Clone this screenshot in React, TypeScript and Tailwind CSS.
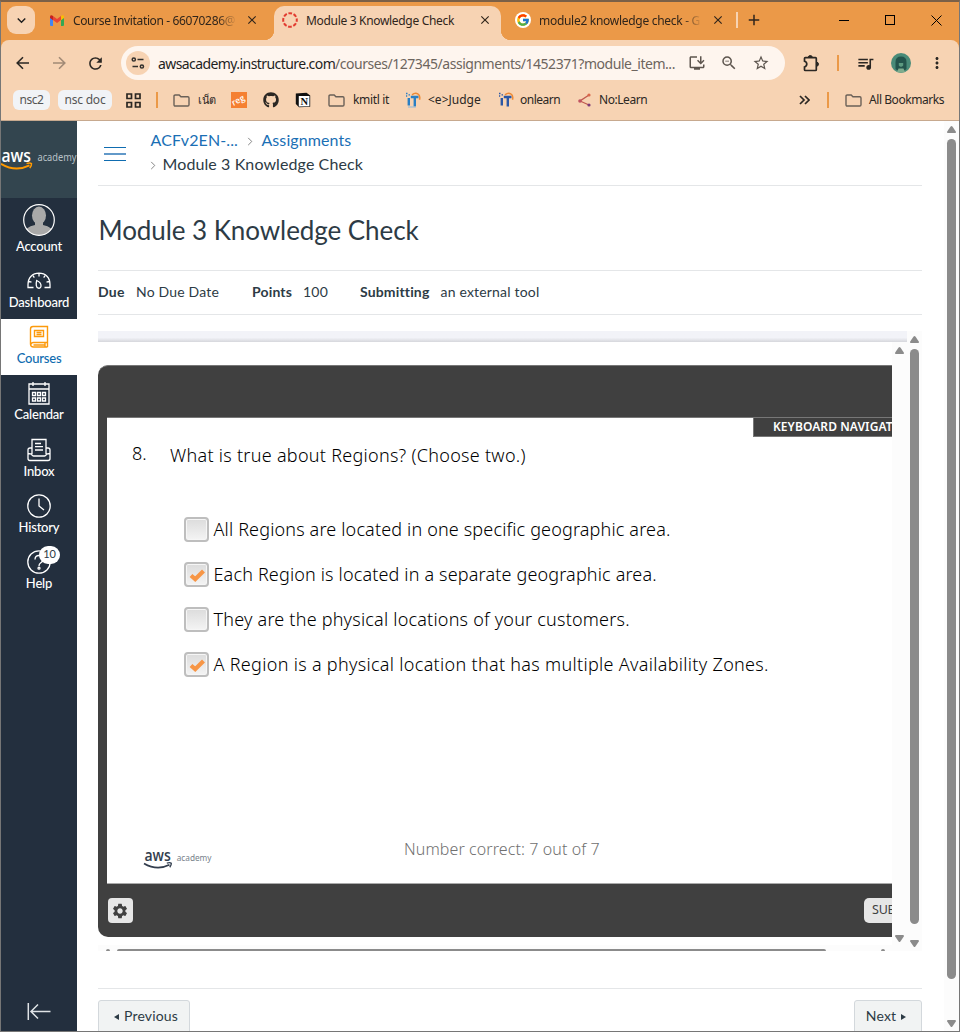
import type { ReactNode } from 'react';
import {
  MdClose, MdInstallDesktop, MdMoreVert, MdQueueMusic, MdRefresh, MdStarBorder, MdZoomOut, MdAdd, MdKeyboardArrowDown, MdSettings,
} from 'react-icons/md';
import { FaGithub } from 'react-icons/fa';
import { FcGoogle } from 'react-icons/fc';

function Gmail() {
  return (
    <svg viewBox="0 0 28 22" className="h-[11px] w-[14px] shrink-0">
      <path d="M0 3v17q0 2 2 2h4V9L0 4z" fill="#4285f4" />
      <path d="M28 3v17q0 2-2 2h-4V9l6-5z" fill="#34a853" />
      <path d="M6 2v8l8 6 8-6V2l-8 6z" fill="#ea4335" />
      <path d="M0 4v2l6 4.5V2C3-1 0 0 0 4z" fill="#c5221f" />
      <path d="M28 4v2l-6 4.5V2c3-3 6-2 6 2z" fill="#fbbc04" />
    </svg>
  );
}

function CanvasRing() {
  return (
    <svg viewBox="0 0 16 16" className="size-4 shrink-0">
      <circle cx="8" cy="8" r="6.8" fill="none" stroke="#e23b30" strokeWidth="2" strokeDasharray="3.7 1.64" strokeDashoffset="1.85" />
    </svg>
  );
}

function SiteInfo() {
  return (
    <svg viewBox="0 0 24 24" className="size-6 shrink-0">
      <circle cx="12" cy="12" r="12" fill="#f7d3b3" />
      <g stroke="#33302d" strokeWidth="1.5" fill="none">
        <circle cx="7.8" cy="8.5" r="1.6" />
        <path d="M11.5 8.5h6M6.500 15.500h5.500" />
        <circle cx="15.9" cy="15.5" r="1.6" />
      </g>
    </svg>
  );
}

function HistoryArrow({ back, className }: { back?: boolean; className: string }) {
  return (
    <svg viewBox="0 0 14 14" className={`size-[14px] shrink-0 fill-none stroke-current stroke-[1.6] ${className}`}>
      {back ? <path d="M13 7H1.500M7 1.200 1.200 7 7 12.800" /> : <path d="M1 7h11.500M7 1.200 12.800 7 7 12.800" />}
    </svg>
  );
}

function Folder({ className }: { className: string }) {
  return (
    <svg viewBox="0 0 17 13" className={`h-[13px] w-[17px] shrink-0 fill-none stroke-[#6b6158] stroke-[1.4] ${className}`}>
      <path d="M1 2.200Q1 1 2.200 1h4l1.700 1.800h6.900q1.200 0 1.200 1.200v6.800q0 1.200-1.200 1.200H2.200Q1 12 1 10.800z" />
    </svg>
  );
}

function Puzzle({ className }: { className: string }) {
  return (
    <svg viewBox="0 0 17 17" className={`size-[17px] shrink-0 fill-none stroke-current stroke-[1.7] ${className}`}>
      <path d="M1.500 6.200V3.500q0-.8.8-.8h10.200q.8 0 .8.800v11.200q0 .8-.8.800H2.300q-.8 0-.8-.8v-2.700q2.300-.7 2.300-2.900t-2.300-2.900z" />
      <path d="M5.300 2.500a2 2 0 0 1 4 0M13.500 7.200a2 2 0 0 1 0 4" fill="currentColor" strokeWidth="1" />
    </svg>
  );
}

function Apps() {
  return (
    <svg viewBox="0 0 15 15" className="size-[15px] shrink-0" fill="none" stroke="#2b2723" strokeWidth="1.7">
      <path d="M1 1h4.5v4.5H1zM9.5 1H14v4.5H9.5zM1 9.5h4.5V14H1zM9.5 9.5H14V14H9.5z" />
    </svg>
  );
}

function RegIcon() {
  return (
    <svg viewBox="0 0 16 16" className="size-4 shrink-0">
      <rect width="16" height="16" fill="#f58032" />
      <text x="1.500" y="12.500" fontSize="8.500" fontWeight="600" fill="#fff" fontFamily="Open Sans, sans-serif" transform="rotate(-28 5 11)">reg</text>
    </svg>
  );
}

function NotionIcon() {
  return (
    <svg viewBox="0 0 16 16" className="size-4 shrink-0">
      <path d="M.8 1.5 11.5.7l3.7 2.7v11.4L4 15.3.8 12z" fill="#111" />
      <path d="M3.8 4h10.6v10.3l-10.6.3z" fill="#fff" />
      <text x="9.2" y="13" fontSize="10.5" fontWeight="700" textAnchor="middle" fill="#111" fontFamily="Liberation Serif, serif">N</text>
    </svg>
  );
}

function ItIcon({ tone }: { tone: 'light' | 'dark' }) {
  const c = tone === 'light' ? '#2a7fc4' : '#2b57a5';
  return (
    <svg viewBox="0 0 16 16" className="size-4 shrink-0" fill="none">
      <path d="M3.800 6v7.500M5.800 5H13.500M9.800 5v9.500" stroke={c} strokeWidth="2.400" />
      <path d="M7 2.800c4-3 9-1 7.500 5" stroke="#ee8a35" strokeWidth="1.500" />
      <path d="M1 1.500h1.500M3.500 2.800H5M1 4h1.200" stroke={c} strokeWidth="1.300" />
      {tone === 'light' && <path d="M3 15h8" stroke="#8fb7d6" strokeWidth="1" />}
    </svg>
  );
}

function ShareIcon() {
  return (
    <svg viewBox="0 0 13 14" className="h-[14px] w-[13px] shrink-0">
      <path d="M11 2 2 8l9 4" fill="none" stroke="#c0584e" strokeWidth="1.300" />
      <circle cx="11" cy="2" r="1.600" fill="#d9674a" />
      <circle cx="2" cy="8" r="1.800" fill="#c05260" />
      <circle cx="11" cy="12" r="1.600" fill="#7e3b78" />
    </svg>
  );
}

function Avatar() {
  return (
    <svg viewBox="0 0 20 20" className="size-5 shrink-0">
      <circle cx="10" cy="10" r="10" fill="#498b78" />
      <path d="M4.500 16V9q0-5.500 5.500-5.500T15.500 9v7l-2 1.500h-7z" fill="#23544c" />
      <path d="M7.800 10h4.400v2.500q-2.200 2.500-4.400 0z" fill="#5c9a80" />
      <path d="M7.500 15.500h5l1.500 3.500q-4 1.500-8 0z" fill="#80ad8e" />
    </svg>
  );
}

function AwsLogo({ className, word, sub, smile }: { className: string; word: string; sub: string; smile: string }) {
  return (
    <svg viewBox="0 0 76 22" className={`overflow-visible ${className}`}>
      <text x="0.500" y="12.500" fontSize="17.500" fontWeight="600" textLength="29.500" lengthAdjust="spacingAndGlyphs" fill={word} fontFamily="Open Sans, sans-serif">aws</text>
      <text x="36.500" y="12" fontSize="10.500" textLength="39" lengthAdjust="spacingAndGlyphs" fill={sub} fontFamily="Noto Sans, sans-serif">academy</text>
      <path d="M0 14.800q14.500 8.500 28.500 1.500" fill="none" stroke={smile} strokeWidth="1.900" />
      <path d="M25.500 14.500q3.500-1 5 .1.200 2-1.700 4.500" fill="none" stroke={smile} strokeWidth="1.500" />
    </svg>
  );
}

function NavItem({ label, icon, active, className }: { label: string; icon: ReactNode; active?: boolean; className: string }) {
  return (
    <a className={`flex w-full shrink-0 flex-col items-center pt-[6px] tracking-[-0.2px] ${active ? 'bg-white text-[#0f6cb0]' : 'text-white'} ${className}`}>
      {icon}
      <span className="mt-[1px] block text-center font-[Lato,sans-serif] text-[13px] leading-4 font-medium whitespace-nowrap">{label}</span>
    </a>
  );
}

const navIcon = 'block size-6 shrink-0 overflow-visible fill-none stroke-current stroke-[1.3]';

function Sidebar() {
  return (
    <nav className="flex w-[76px] shrink-0 flex-col bg-[#232f3e]">
      <div className="flex h-[77px] shrink-0 items-center bg-[#33454f]">
        <AwsLogo className="h-[22px] w-[76px]" word="#ffffff" sub="#b9c2c8" smile="#ff9900" />
      </div>
      <a className="flex h-[65px] shrink-0 flex-col items-center pt-[6px] tracking-[-0.2px] text-white">
        <svg viewBox="0 0 32 32" className="block size-8 shrink-0">
          <clipPath id="face"><circle cx="16" cy="16" r="15.400" /></clipPath>
          <g clipPath="url(#face)" fill="#a9a9a9">
            <ellipse cx="16" cy="11.500" rx="7" ry="9" />
            <path d="M12 18h8v3q10 2 11 9l-8 4H9l-8-4q1-7 11-9z" />
          </g>
          <circle cx="16" cy="16" r="15.300" fill="none" stroke="#fff" strokeWidth="1.200" />
        </svg>
        <span className="mt-[2px] font-[Lato,sans-serif] text-[13px] leading-4 font-medium">Account</span>
      </a>
      <NavItem className="h-[56px]" label="Dashboard" icon={
        <svg viewBox="0 0 24 24" className={navIcon}>
          <path d="M6.500 18.500H1v-2.800C1 8.500 5.500 4.200 12 4.200S23 8.500 23 15.700v2.800h-5.500M12 4.500v3M6 6.700l1.300 2M18 6.700l-1.300 2M2 12.500l2.500.7M22 12.500l-2.500.7M9.700 11.500c3 1.300 4.400 3.500 4.300 5.500-.1 1.600-1.300 2.500-2.600 2.200-2.300-.6-2.700-4-1.700-7.700z" />
        </svg>} />
      <NavItem active className="h-[56px]" label="Courses" icon={
        <svg viewBox="0 0 24 24" className="block size-6 shrink-0 fill-none stroke-[#fc9a0c] stroke-[1.4]">
          <path d="M20.500 17.500V1.500H6q-2.500 0-2.500 2.500v15q0 3 3 3h14M4 19.500q0-2 2.500-2h14v4.500M6.500 20h11M18 17.500V22M7.500 5.500h9v6h-9zM9.500 7.500h5M9.500 9.500h5" />
        </svg>} />
      <NavItem className="h-[57px]" label="Calendar" icon={
        <svg viewBox="0 0 24 24" className={navIcon}>
          <path d="M2 3h20v20H2zM2 8h20M6 1v4M18 1v4M5.500 11.500h3v3h-3zM10.500 11.500h3v3h-3zM15.500 11.500h3v3h-3zM5.500 17h3v3h-3zM10.500 17h3v3h-3zM15.500 17h3v3h-3z" />
        </svg>} />
      <NavItem className="h-[56px]" label="Inbox" icon={
        <svg viewBox="0 0 24 24" className={navIcon}>
          <path d="M5 16V1.500h14V16M5 10H3q-2 0-2 2v8.500q0 2 2 2h18q2 0 2-2V12q0-2-2-2h-2M1 15.500l3.500.5q.5 2 2 2h11q1.500 0 2-2l3.500-.5M8 5.500h6M8 8.700h8M8 12h8" />
        </svg>} />
      <NavItem className="h-[56px]" label="History" icon={
        <svg viewBox="0 0 24 24" className={navIcon}>
          <circle cx="12" cy="12" r="11.200" /><path d="M12 4.500V12l5 4" />
        </svg>} />
      <NavItem className="h-[57px]" label="Help" icon={
        <span className="relative">
          <svg viewBox="0 0 24 24" className={navIcon}>
            <circle cx="12" cy="12" r="11.200" /><path d="M8 9.500Q8 5.500 12 5.500t4 4q0 2-2.500 3.500-1.500 1-1.500 3" /><circle cx="12" cy="18.200" r="1" />
          </svg>
          <span className="absolute -top-[4px] left-[12px] flex h-[18px] w-[21px] items-center justify-center rounded-full bg-white pb-px font-[Lato,sans-serif] text-[11px] text-[#2d3b45]">10</span>
        </span>} />
      <svg viewBox="0 0 24 18" className="mt-auto mb-[10px] ml-[26px] h-[18px] w-6 fill-none stroke-[#dfe3e6] stroke-[1.5]">
        <path d="M1.300 0v17M23.500 8.500H4M11 1.500 4 8.500l7 7" />
      </svg>
    </nav>
  );
}

function Arrow({ dir, className }: { dir: 'up' | 'down'; className: string }) {
  return (
    <svg viewBox="0 0 9 7" className={`h-[7px] w-[9px] shrink-0 ${className}`} fill="#8b8b8b">
      {dir === 'up' ? <path d="M3.600.6q.9-1 1.800 0L8.800 5.500Q9.200 7 8 7H1Q-.2 7 .2 5.500z" /> : <path d="M3.600 6.400q.9 1 1.800 0L8.800 1.500Q9.200 0 8 0H1Q-.2 0 .2 1.500z" />}
    </svg>
  );
}

function Option({ label, checked, track }: { label: string; checked?: boolean; track: string }) {
  return (
    <label className="flex h-[45px] items-center pl-[77px]">
      <span className="flex size-[25px] shrink-0 items-center justify-center rounded-[4px] border-2 border-[#bebebe] bg-linear-to-b from-[#dcdcdc] to-[#f4f4f4] shadow-[inset_0_0_0_1px_#f6f6f6]">
        {checked && (
          <svg viewBox="0 0 16 14" className="h-[14px] w-[16px] overflow-visible fill-none stroke-[#f79646] stroke-[4.2]"><path d="M2 7.500l4.200 3.700L14.500 3" /></svg>
        )}
      </span>
      <span className={`mb-[2px] ml-[4.500px] font-["Noto_Sans",sans-serif] text-[18px] leading-6 font-light whitespace-nowrap text-black ${track}`}>{label}</span>
    </label>
  );
}

function Lesson() {
  return (
    <div className="mt-4 flex h-[620px] w-[824px] shrink-0">
      <div className="flex w-[809px] flex-col overflow-hidden">
        <div className="h-[11px] shrink-0 bg-[#f2f3f8] bg-linear-to-b from-[#f2f3f8] from-60% to-[#d6d7dc]" />
        <div className="flex h-[603px] shrink-0">
          <div className="w-[794px] overflow-hidden pt-[23px]">
            <div className="flex h-[572px] w-[794px] flex-col overflow-hidden rounded-l-[10px] border-t border-[#777] bg-[#404040] pl-[9px]">
              <div className="mt-[51px] flex h-[467px] shrink-0 flex-col border-t border-b border-[#777] border-b-[#aaa] bg-white">
                <div className="ml-[646px] flex h-[19px] shrink-0 items-center border-b border-l border-[#777] bg-[#404040] pl-[19px] font-['Noto_Sans',sans-serif] text-[12px] font-semibold tracking-[0.08px] whitespace-nowrap text-white">KEYBOARD NAVIGATION</div>
                <div className="flex h-[36px] shrink-0 items-center pl-[25px] font-['Noto_Sans',sans-serif] text-[18px] font-light text-black">
                  <span className="relative -top-[2px] w-[38px]">8.</span>
                  <span className="tracking-[0.28px]">What is true about Regions? (Choose two.)</span>
                </div>
                <div className="mt-[34px]">
                  <Option label="All Regions are located in one specific geographic area." track="tracking-[0.16px]" />
                  <Option checked label="Each Region is located in a separate geographic area." track="tracking-[0.16px]" />
                  <Option label="They are the physical locations of your customers." track="tracking-[0.21px]" />
                  <Option checked label="A Region is a physical location that has multiple Availability Zones." track="tracking-[0.31px]" />
                </div>
                <div className="mt-[151px] flex h-[40px] items-start pl-[37px]">
                  <AwsLogo className="mt-[12px] h-[20px] w-[68px]" word="#333e4e" sub="#777f8b" smile="#333e4e" />
                  <span className="ml-[192px] font-['Noto_Sans',sans-serif] text-[16px] leading-[22px] font-light tracking-[0.1px] text-[#707070]">Number correct: 7 out of 7</span>
                </div>
              </div>
              <div className="flex h-[53px] items-center justify-between">
                <button className="ml-px flex size-[25px] items-center justify-center rounded-[4px] bg-[#e6e6e6] text-[#404040]"><MdSettings className="mr-px size-[18px]" /></button>
                <button className="flex h-[25px] w-[28px] items-center overflow-hidden rounded-l-[5px] bg-[#e6e6e6] pl-[8px] font-['Noto_Sans',sans-serif] text-[12.5px] tracking-[-0.2px] text-[#404040]">SUBMIT</button>
              </div>
            </div>
          </div>
          <div className="flex w-[15px] flex-col items-center justify-between bg-[#fcfcfc] pt-[5px]">
            <Arrow dir="up" className="" />
            <Arrow dir="down" className="mb-[3px]" />
          </div>
        </div>
        <div className="flex h-[6px] items-end bg-[#fcfcfc]">
          <span className="ml-[8px] h-[2px] w-[4px] rounded-t bg-[#8b8b8b]" />
          <span className="ml-[7px] h-[2px] w-[709px] rounded-t-[2px] bg-[#8b8b8b]" />
          <span className="ml-[55px] h-[2px] w-[4px] rounded-t bg-[#8b8b8b]" />
        </div>
      </div>
      <div className="flex w-[15px] flex-col items-center bg-[#fcfcfc] pt-[5px]">
        <Arrow dir="up" className="" />
        <div className="mt-[6px] h-[575px] w-[9px] shrink-0 rounded-full bg-[#8b8b8b]" />
        <Arrow dir="down" className="mt-[16px]" />
      </div>
    </div>
  );
}

function Tabs() {
  return (
    <div className="flex h-[38px] shrink-0 bg-[#eb9948] text-[12px] text-[#30251b]">
      <div className="ml-[6px] mt-1 flex size-7 items-center justify-center rounded-[9px] bg-[#f7d3b3] text-[#1f1f1f]"><MdKeyboardArrowDown className="size-[17px]" /></div>
      <div className="relative flex h-[36px] w-[239px] items-center pl-[15px]">
        <Gmail />
        <span className="mt-px ml-[9px] w-[164px] overflow-hidden mask-r-from-88% tracking-[-0.36px] whitespace-nowrap">Course Invitation - 66070286@</span>
        <MdClose className="ml-[8px] size-[14px]" />
        <span className="absolute right-0 bottom-[-2px] size-[10px] bg-[radial-gradient(circle_at_0_0,transparent_10px,#f7d3b3_10.5px)]" />
      </div>
      <div className="mt-1 flex h-[34px] w-[227px] items-center rounded-t-[10px] bg-[#f7d3b3] pb-[6px] pl-[8px]">
        <CanvasRing />
        <span className="mt-px ml-[8px] w-[150px] tracking-[-0.32px] whitespace-nowrap">Module 3 Knowledge Check</span>
        <MdClose className="ml-[22px] size-[14px]" />
      </div>
      <div className="relative flex h-[36px] items-center pl-[14px]">
        <span className="absolute bottom-[-2px] left-0 size-[10px] bg-[radial-gradient(circle_at_100%_0,transparent_10px,#f7d3b3_10.5px)]" />
        <span className="flex size-4 items-center justify-center rounded-full bg-white"><FcGoogle className="size-[14px]" /></span>
        <span className="mt-px ml-[8px] w-[163px] overflow-hidden mask-r-from-88% tracking-[-0.29px] whitespace-nowrap">module2 knowledge check - G</span>
        <MdClose className="ml-[9px] size-[14px]" />
        <span className="ml-[11px] h-[16px] w-[2px] bg-[#f7d3b3]" />
        <MdAdd className="ml-[7px] size-[18px]" />
      </div>
      <div className="mr-[17px] ml-auto flex h-[36px] items-center text-black">
        <span className="h-px w-[10px] bg-black" />
        <span className="ml-[36px] size-[10px] border border-black" />
        <svg viewBox="0 0 11 11" className="ml-[36px] size-[11px] stroke-black"><path d="M.5.5l10 10M10.500.5l-10 10" /></svg>
      </div>
    </div>
  );
}

function Toolbar() {
  return (
    <div className="h-[81px] shrink-0 bg-[#eb9948]">
      <div className="flex h-[81px] flex-col rounded-t-[8px] border-b border-[#c7a98f] bg-[#f7d3b3]">
        <div className="mt-[6px] flex h-[34px] shrink-0 items-center text-[#2b2723]">
          <HistoryArrow back className="ml-[15px]" />
          <HistoryArrow className="ml-[22px] text-[#a18a76]" />
          <MdRefresh className="ml-[20px] size-[19px]" />
          <div className="ml-[16px] flex h-[34px] w-[664px] shrink-0 items-center rounded-full bg-[#fef5ee] pl-[5px]">
            <SiteInfo />
            <span className="ml-[8px] w-[177px] text-[14px] tracking-[-0.58px] whitespace-nowrap text-[#1f1f1f]">awsacademy.instructure.com</span>
            <span className="w-[341px] text-[14px] tracking-[-0.46px] whitespace-nowrap text-[#6d655e]">/courses/127345/assignments/1452371?module_item...</span>
            <MdInstallDesktop className="ml-[12px] size-[18px] text-[#5d554e]" />
            <MdZoomOut className="ml-[14px] size-[18px] text-[#5d554e]" />
            <MdStarBorder className="ml-[14px] size-[18px] text-[#5d554e]" />
          </div>
          <Puzzle className="ml-[18px]" />
          <span className="ml-[17px] h-4 w-[2px] bg-[#eb9948]" />
          <MdQueueMusic className="ml-[17px] size-[19px]" />
          <span className="ml-[16px]"><Avatar /></span>
          <MdMoreVert className="ml-[17px] size-[18px]" />
        </div>
        <div className="mt-[9px] flex h-[22px] shrink-0 items-center text-[12px] leading-[20px] whitespace-nowrap text-[#2b2723]">
          <span className="ml-[12px] flex h-5 w-[37px] items-center justify-center rounded-[6px] bg-[#f1f3f6] tracking-[-0.45px] text-[#555]">nsc2</span>
          <span className="ml-[8px] flex h-5 w-[54px] items-center justify-center rounded-[6px] bg-[#f1f3f6] tracking-[-0.21px] text-[#555]">nsc doc</span>
          <span className="ml-[14px]"><Apps /></span>
          <span className="ml-[15px] h-4 w-[2px] bg-[#eb9948]" />
          <Folder className="ml-[15px]" />
          <span className="ml-[8px] w-[18px] text-[11px] tracking-[-0.3px]">เน็ต</span>
          <span className="ml-[15px]"><RegIcon /></span>
          <FaGithub className="ml-[16px] size-4" />
          <span className="ml-[16px]"><NotionIcon /></span>
          <Folder className="ml-[17px]" />
          <span className="ml-[8px] w-[37px] tracking-[-0.34px]">kmitl it</span>
          <span className="ml-[15px]"><ItIcon tone="light" /></span>
          <span className="ml-[7px] w-[54px]">&lt;e&gt;Judge</span>
          <span className="ml-[16px]"><ItIcon tone="dark" /></span>
          <span className="ml-[6px] w-[41px] tracking-[-0.5px]">onlearn</span>
          <span className="ml-[17px]"><ShareIcon /></span>
          <span className="ml-[8px] w-[49px] tracking-[-0.45px]">No:Learn</span>
          <svg viewBox="0 0 11 10" className="mr-[17px] ml-auto h-[10px] w-[11px] fill-none stroke-[#2b2723] stroke-[1.7]"><path d="M1 1l4 4-4 4M6 1l4 4-4 4" /></svg>
          <span className="h-4 w-[2px] bg-[#eb9948]" />
          <Folder className="ml-[16px]" />
          <span className="mr-[14px] ml-[7px] w-[76px] tracking-[-0.44px]">All Bookmarks</span>
        </div>
      </div>
    </div>
  );
}

function Chevron({ className }: { className: string }) {
  return <svg viewBox="0 0 6 10" className={`inline-block h-[9px] w-[6px] fill-none stroke-[#777] ${className}`}><path d="M1 1l4 4-4 4" /></svg>;
}

export default function App() {
  return (
    <div className="flex h-[1032px] w-[960px] flex-col overflow-hidden border-x border-t-2 border-b border-[#767676] border-t-[#7b6047] bg-white font-['Noto_Sans',sans-serif]">
      <Tabs />
      <Toolbar />
      <div className="flex min-h-0 flex-1">
        <Sidebar />
        <main className="ml-[21px] flex w-[824px] shrink-0 flex-col overflow-hidden font-[Lato,sans-serif] text-[#2d3b45]">
          <header className="flex h-[65px] shrink-0 border-b border-[#e4e6e8]">
            <div className="mt-[26px] ml-[6px] flex h-[14px] w-[22px] flex-col justify-between">
              <span className="h-px bg-[#0f6cb0]" /><span className="h-[2px] bg-[#6299c9]" /><span className="h-px bg-[#0f6cb0]" />
            </div>
            <div className="mt-[7px] ml-[24.5px] text-[16px] leading-6 tracking-[0.1px]">
              <div className="text-[#1a6fb5]">ACFv2EN-...<Chevron className="mr-[8px] ml-[9.5px]" />Assignments</div>
              <div><Chevron className="mr-[7px] -ml-[1px]" />Module 3 Knowledge Check</div>
            </div>
          </header>
          <h1 className="flex h-[85px] shrink-0 items-center border-b border-[#e4e6e8] pt-[4px] pl-[0.5px] text-[26px] tracking-[-0.07px]">Module 3 Knowledge Check</h1>
          <div className="flex h-[44px] shrink-0 items-center border-b border-[#e4e6e8] pb-[2px] text-[14px] whitespace-nowrap">
            <b className="w-[38px] tracking-[0.3px]">Due</b><span className="w-[116px] tracking-[0.18px]">No Due Date</span>
            <b className="w-[51px] tracking-[0.15px]">Points</b><span className="w-[57px] tracking-[0.2px]">100</span>
            <b className="w-[80.500px] tracking-[0.15px]">Submitting</b><span className="tracking-[0.19px]">an external tool</span>
          </div>
          <Lesson />
          <footer className="mt-[37px] flex shrink-0 justify-between border-t border-[#e4e6e8] pt-[11px] text-[14px] tracking-[0.15px]">
            <button className="flex h-[38px] w-[92px] items-center justify-center rounded-t-[3px] border border-[#d3d8dc] bg-[#f1f3f3] pb-[7px]">
              <svg viewBox="0 0 5 6" className="mt-[2px] mr-[5px] ml-[4px] h-[6px] w-[5px] fill-[#2d3b45]"><path d="M5 0v6L0 3z" /></svg>Previous
            </button>
            <button className="flex h-[38px] w-[68px] items-center justify-center rounded-t-[3px] border border-[#d3d8dc] bg-[#f1f3f3] pr-[4px] pb-[7px]">
              Next<svg viewBox="0 0 5 6" className="mt-[2px] ml-[5px] h-[6px] w-[5px] fill-[#2d3b45]"><path d="M0 0v6l5-3z" /></svg>
            </button>
          </footer>
        </main>
        <div className="ml-auto flex w-[15px] flex-col items-center bg-[#fcfcfc] pt-[5px]">
          <Arrow dir="up" className="" />
          <div className="mt-[6px] h-[840px] w-[9px] shrink-0 rounded-full bg-[#8b8b8b]" />
          <Arrow dir="down" className="mt-auto mb-[4px]" />
        </div>
      </div>
    </div>
  );
}
